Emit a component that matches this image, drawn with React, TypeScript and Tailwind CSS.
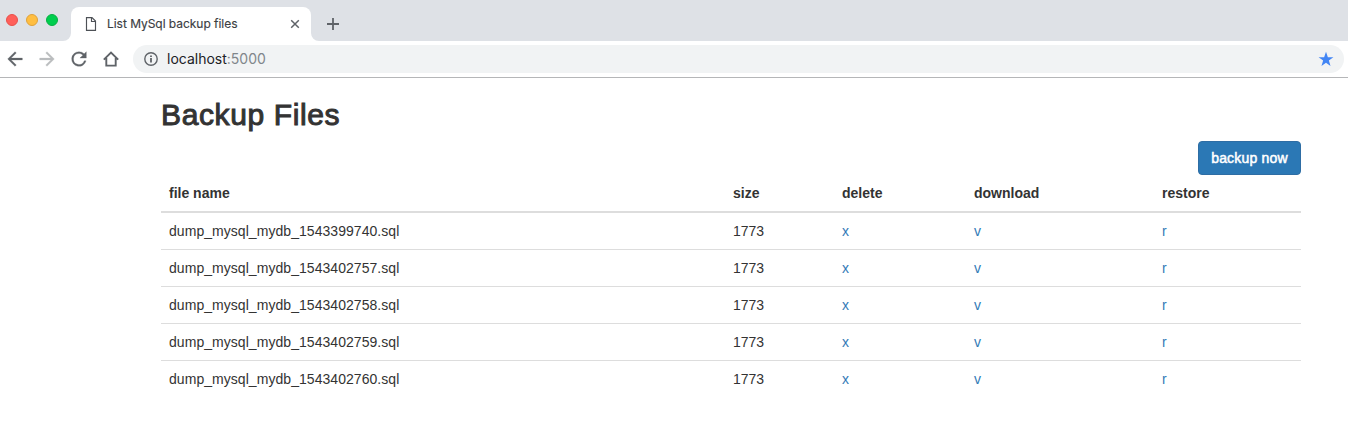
import type { ReactNode } from "react";

const files = [
  "dump_mysql_mydb_1543399740.sql",
  "dump_mysql_mydb_1543402757.sql",
  "dump_mysql_mydb_1543402758.sql",
  "dump_mysql_mydb_1543402759.sql",
  "dump_mysql_mydb_1543402760.sql",
];

function Icon({ d, className }: { d: string; className: string }) {
  return (
    <svg viewBox="0 0 24 24" fill="currentColor" className={`shrink-0 ${className}`}>
      <path d={d} />
    </svg>
  );
}

function TabBar() {
  return (
    <div className="flex h-[41px] items-end bg-[#dee1e6]">
      <div className="flex h-[41px] w-[63px] shrink-0 gap-2 pl-1.5 pt-3.5">
        <span className="size-3 rounded-full border border-[#e9504b] bg-[#ff5f5a]" />
        <span className="size-3 rounded-full border border-[#dfa23a] bg-[#ffbe41]" />
        <span className="size-3 rounded-full border border-[#08b043] bg-[#00ce4e]" />
      </div>
      <svg className="size-2 shrink-0" viewBox="0 0 8 8">
        <path d="M8 0v8H0a8 8 0 0 0 8-8z" fill="#fff" />
      </svg>
      <div className="flex h-[34px] w-[240px] shrink-0 items-center rounded-t-lg bg-white pl-[14px] pr-[11px]">
        <svg className="h-[14px] w-3 shrink-0" viewBox="0 0 12 14" fill="none" stroke="#4d5156" strokeWidth="1.15">
          <path d="M1.5 .6H7l3.500 3.500v9.300H1.500zM6.500 .8v3.700h4" />
        </svg>
        <span className="ml-[10px] whitespace-nowrap text-[12px] tracking-[-0.04px] text-[#3c4043] [-webkit-text-stroke:0.15px_#3c4043]">
          List MySql backup files
        </span>
        <svg className="ml-auto size-[10px] shrink-0" viewBox="0 0 10 10" stroke="#5f6368" strokeWidth="1.5">
          <path d="M1.2 1.2l7.6 7.6M8.8 1.2L1.2 8.8" />
        </svg>
      </div>
      <svg className="size-2 shrink-0" viewBox="0 0 8 8">
        <path d="M0 0v8h8a8 8 0 0 1-8-8z" fill="#fff" />
      </svg>
      <svg className="mb-[11px] ml-2 size-3 shrink-0" viewBox="0 0 12 12" stroke="#5f6368" strokeWidth="1.8">
        <path d="M6 0v12M0 6h12" />
      </svg>
    </div>
  );
}

function Toolbar() {
  return (
    <div className="flex h-[37px] items-center border-b border-[#b5b6b8] bg-white px-1 text-[#5f6368]">
      <Icon
        className="size-[22px] stroke-current stroke-[0.3]"
        d="M20 11H7.830l5.590-5.590L12 4l-8 8 8 8 1.410-1.410L7.830 13H20v-2z"
      />
      <Icon
        className="ml-[10px] size-[22px] stroke-current stroke-[0.3] text-[#babcbe]"
        d="M12 4l-1.410 1.410L16.170 11H4v2h12.170l-5.580 5.590L12 20l8-8z"
      />
      <Icon
        className="ml-[10px] size-[22px] stroke-current stroke-[0.3]"
        d="M17.650 6.350A7.960 7.960 0 0 0 12 4a8 8 0 1 0 7.730 10h-2.080A6 6 0 1 1 12 6c1.660 0 3.140.69 4.220 1.780L13 11h7V4l-2.350 2.350z"
      />
      <svg className="ml-[13px] size-4 shrink-0" viewBox="0 0 16 16" fill="none" stroke="currentColor" strokeWidth="1.9">
        <path d="M.8 8.600L8 1.500l7.200 7.100M3.300 7v7.600h9.400V7" />
      </svg>
      <div className="ml-[14px] flex h-7 flex-1 items-center rounded-full bg-[#f1f3f4] pl-[11px] pr-[10px]">
        <svg className="size-[14px] shrink-0" viewBox="0 0 14 14" fill="none" stroke="currentColor" strokeWidth="1.4">
          <circle cx="7" cy="7" r="6.2" />
          <path d="M7 6v4.500M7 3.500V5" strokeWidth="1.8" />
        </svg>
        <span className="-mt-px ml-[9px] text-[14px] text-[#202124]">
          localhost<span className="text-[#80868b]">:5000</span>
        </span>
        <Icon
          className="ml-auto size-4 text-[#4285f4]"
          d="M12 17.800l6.800 4.700-2.500-8.100 6.800-5h-8.300L12 1 9.200 9.400H.9l6.800 5-2.500 8.100z"
        />
      </div>
    </div>
  );
}

function Head({ children, className }: { children: ReactNode; className: string }) {
  return (
    <th className={`border-b-2 border-[#ddd] p-2 text-left font-bold ${className}`}>
      {children}
    </th>
  );
}

function ActionLink({ children }: { children: ReactNode }) {
  return (
    <td className="p-2">
      <a href="#" className="text-[#337ab7]">{children}</a>
    </td>
  );
}

export default function App() {
  return (
    <div className="min-h-[444px] bg-white font-['Inter','Liberation_Sans',sans-serif]">
      <TabBar />
      <Toolbar />
      <main className="ml-[161px] w-[1140px] pt-5 font-['Liberation_Sans',Arial,sans-serif] text-[14px] leading-5 text-[#333]">
        <h2 className="h-[33px] text-[30px] leading-[33px] tracking-[0.62px] [-webkit-text-stroke:1px_#333]">
          Backup Files
        </h2>
        <div className="mt-[10px] flex justify-end">
          <button className="h-[34px] w-[103px] whitespace-nowrap rounded border border-[#2e6da4] bg-[#2b78b5] text-[14px] tracking-[0.2px] text-white [-webkit-text-stroke:0.5px_#fff]">
            backup now
          </button>
        </div>
        <table className="w-full table-fixed border-separate border-spacing-0">
          <thead>
            <tr>
              <Head className="w-[564px]">file name</Head>
              <Head className="w-[109px]">size</Head>
              <Head className="w-[132px]">delete</Head>
              <Head className="w-[188px]">download</Head>
              <Head className="w-[147px]">restore</Head>
            </tr>
          </thead>
          <tbody className="[&>tr:not(:last-child)>td]:border-b [&>tr:not(:last-child)>td]:border-[#ddd]">
            {files.map((file) => (
              <tr key={file}>
                <td className="p-2 tracking-[0.05px]">{file}</td>
                <td className="p-2">1773</td>
                <ActionLink>x</ActionLink>
                <ActionLink>v</ActionLink>
                <ActionLink>r</ActionLink>
              </tr>
            ))}
          </tbody>
        </table>
      </main>
    </div>
  );
}
